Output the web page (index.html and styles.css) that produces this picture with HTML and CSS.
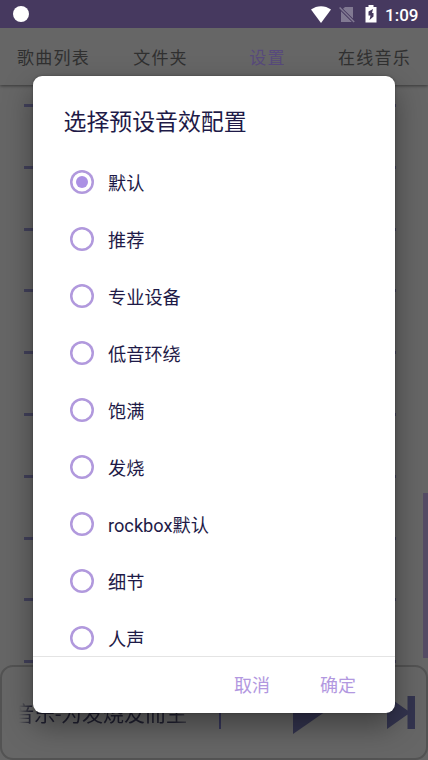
FILE: index.html
```html
<!DOCTYPE html>
<html lang="zh-CN">
<head>
<meta charset="utf-8">
<title>选择预设音效配置</title>
<link rel="stylesheet" href="styles.css">
</head>
<body>
<div class="screen">
  <header class="status">
    <span class="notice"></span>
    <svg class="wifi" viewBox="0 0 20 17"><path d="M0 3.6C6-1 14-1 20 3.6L10 17Z"/></svg>
    <svg class="sim" viewBox="0 0 16 17"><path d="M6 1H14V12.5L4 2.8ZM2 5.2L12.8 16H2Z"/><path class="slash" d="M.6 1.5L15.2 16"/></svg>
    <svg class="battery" viewBox="0 0 12 18"><path d="M3.5 0H8.5V2H11.5V17.5H.5V2H3.5Z"/><path class="bolt" d="M8 4L3.5 6.5V10.5H5.5L4.5 15L8.5 11.5V8H7Z"/></svg>
    <span class="time">1:09</span>
  </header>
  <nav class="tabs">
    <span>歌曲列表</span><span>文件夹</span><span class="active">设置</span><span>在线音乐</span>
  </nav>
  <main class="settings">
    <div class="rows"><i></i><i></i><i></i><i></i><i></i><i></i><i></i><i></i><i></i><i></i></div>
    <div class="scrollbar"></div>
  </main>
  <footer class="player">
    <div class="song"><span>音乐-为发烧友而生</span></div>
    <span class="divider"></span>
    <svg class="play" viewBox="0 0 31 43"><path d="M0 0L31 21.5L0 43Z"/></svg>
    <svg class="next" viewBox="0 0 28 33"><path d="M0 0L20.5 14.5V0H28V33H20.5V18.5L0 33Z"/></svg>
  </footer>
  <section class="dialog" role="dialog">
    <h1>选择预设音效配置</h1>
    <div class="options">
      <label><i class="radio checked"></i><span>默认</span></label>
      <label><i class="radio"></i><span>推荐</span></label>
      <label><i class="radio"></i><span>专业设备</span></label>
      <label><i class="radio"></i><span>低音环绕</span></label>
      <label><i class="radio"></i><span>饱满</span></label>
      <label><i class="radio"></i><span>发烧</span></label>
      <label><i class="radio"></i><span>rockbox默认</span></label>
      <label><i class="radio"></i><span>细节</span></label>
      <label><i class="radio"></i><span>人声</span></label>
    </div>
    <div class="actions"><span>取消</span><span>确定</span></div>
  </section>
</div>
</body>
</html>
```
FILE: styles.css
```css
* { box-sizing: border-box; }
body { margin: 0; font-family: Roboto, "Noto Sans CJK SC", sans-serif; }
.screen { position: relative; width: 428px; height: 760px; overflow: hidden; background: #666; display: flex; flex-direction: column; }
.status { height: 28px; flex: none; display: flex; align-items: center; background: #46395f; padding: 0 10px 0 13px; color: #fff; position: relative; z-index: 3; }
.status svg { fill: #fff; flex: none; }
.notice { width: 16px; height: 16px; border-radius: 50%; background: #fff; margin-right: auto; }
.wifi { width: 20px; height: 17px; margin-right: 8px; }
.sim { width: 16px; height: 17px; margin-right: 10px; opacity: .32; }
.slash { stroke: #fff; stroke-width: 1.5; }
.battery { width: 12px; height: 18px; margin-right: 8px; }
.battery .bolt { fill: #46395f; }
.time { font-size: 17px; font-weight: 500; width: 33px; line-height: 28px; padding-top: 1px; white-space: nowrap; }
.tabs { height: 57px; flex: none; display: grid; grid-template-columns: repeat(4, 107px); background: #666; box-shadow: 0 1px 3px rgba(0,0,0,.45); color: #303030; font-size: 17px; letter-spacing: 1.2px; line-height: 61px; text-align: center; position: relative; z-index: 1; }
.tabs .active { color: #584a7c; }
.settings { flex: 1; display: flex; justify-content: space-between; padding-left: 24px; min-height: 0; }
.rows { width: 372px; padding-top: 19px; }
.rows i { display: block; height: 61.8px; border-top: 3px solid #42415b; }
.scrollbar { width: 5px; height: 165px; margin-top: 408px; background: #554c65; }
.player { height: 95px; flex: none; display: flex; align-items: center; border: 2px solid #535353; border-radius: 13px; padding: 0 11px 0 17px; background: #666; position: relative; z-index: 1; }
.song { width: 168px; overflow: hidden; display: flex; justify-content: flex-end; font-size: 21px; line-height: 30px; padding-top: 2px; color: #202030; white-space: nowrap; -webkit-mask-image: linear-gradient(90deg, transparent, #000 12px, #000 155px, rgba(0,0,0,.5)); mask-image: linear-gradient(90deg, transparent, #000 12px, #000 155px, rgba(0,0,0,.5)); }
.divider { width: 2px; height: 32px; background: #36365a; margin-left: 32px; }
.player svg { fill: #33344f; flex: none; }
.play { width: 31px; height: 43px; margin-left: 72px; }
.next { width: 28px; height: 33px; margin-left: auto; }
.dialog { position: absolute; z-index: 2; left: 33px; top: 76px; width: 362px; height: 637px; display: flex; flex-direction: column; background: #fff; border-radius: 9px; box-shadow: 0 13px 30px rgba(0,0,0,.38), 0 0 3px rgba(0,0,0,.3); overflow: hidden; color: #1e1a47; }
h1 { margin: 0; height: 77px; flex: none; padding: 29px 30.5px 0; font-size: 22.9px; font-weight: 400; line-height: 36px; }
.options { height: 504px; flex: none; overflow: hidden; border-bottom: 1px solid #e4e4e4; }
.options label { height: 57px; display: flex; align-items: center; padding: 1px 0 0 37px; gap: 14px; font-size: 18.2px; }
.options span { padding-bottom: 1px; }
.radio { width: 24px; height: 24px; flex: none; box-shadow: inset 0 0 0 2.5px #b199dd; border-radius: 50%; display: flex; align-items: center; justify-content: center; }
.radio.checked::after { content: ""; width: 12px; height: 12px; border-radius: 50%; background: #ab90e4; }
.actions { flex: 1; display: flex; justify-content: flex-end; align-items: center; gap: 50px; padding: 0 39px 2px 0; font-size: 18px; color: #b298e0; }
```
